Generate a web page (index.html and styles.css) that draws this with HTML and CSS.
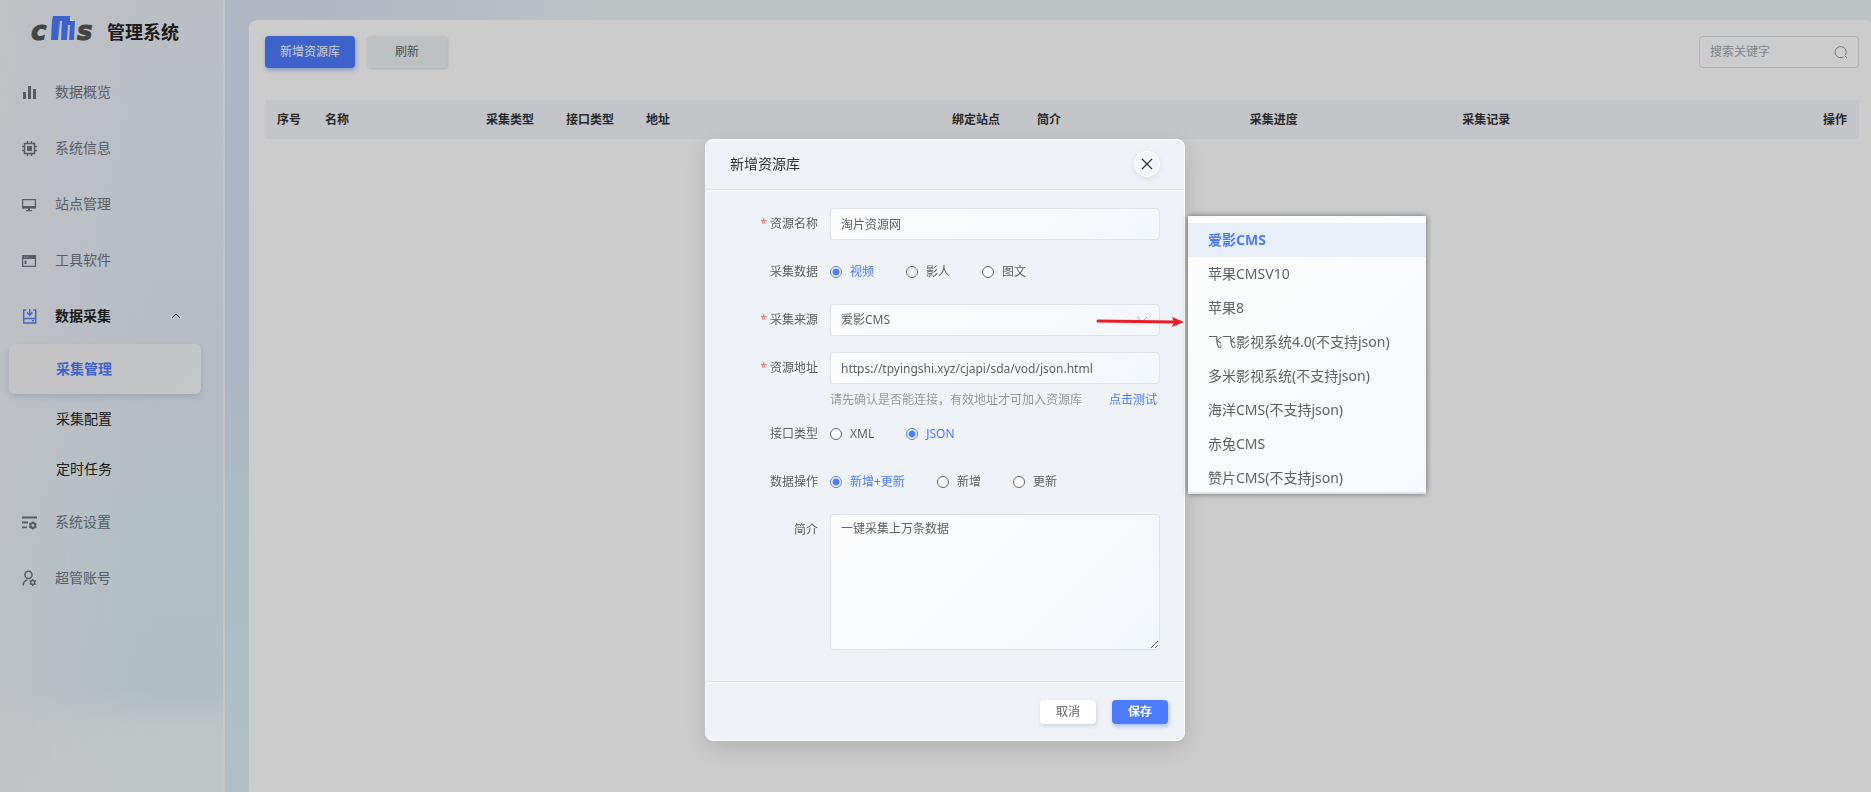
FILE: index.html
```html
<!DOCTYPE html>
<html lang="zh-CN">
<head>
    <meta charset="UTF-8">
    <meta name="viewport" content="width=device-width, initial-scale=1.0">
    <title>CMS 管理系统</title>
    <link rel="stylesheet" href="styles.css">
</head>
<body>
    <div class="layout">
        <aside class="sidebar">
            <div class="logo">
                <svg class="logo-mark" width="66" height="36" viewBox="0 0 66 36">
                    <text class="logo-letter" x="1" y="28">c</text>
                    <path fill="#4d7cfe" d="M23 4h17l5 5-1 19h-5l1-15h-2l-1 15h-6l1-19h-2l-2 19h-7l1-19z"/>
                    <path fill="#fff" d="M40 4l5 5h-5z"/>
                    <text class="logo-letter" x="47" y="28">s</text>
                </svg>
                <span class="logo-name">管理系统</span>
            </div>
            <nav>
                <ul class="menu">
                    <li>
                        <a href="#" class="menu-item">
                            <svg class="icon" viewBox="0 0 16 16"><path fill="currentColor" d="M1 8h3v7H1zM6 2h3v13H6zM11 5h3v10h-3z"/></svg>
                            <span>数据概览</span>
                        </a>
                    </li>
                    <li>
                        <a href="#" class="menu-item">
                            <svg class="icon" viewBox="0 0 16 16"><path fill="none" stroke="currentColor" stroke-width="1.500" d="M2.500 3.500h10v10h-10zM5.500 1v2.500M9.500 1v2.500M5.500 13.500V16M9.500 13.500V16M0 6.500h2.500M0 10.500h2.500M12.500 6.500H15M12.500 10.500H15"/><path fill="currentColor" d="M5 6h5v5H5z"/></svg>
                            <span>系统信息</span>
                        </a>
                    </li>
                    <li>
                        <a href="#" class="menu-item">
                            <svg class="icon" viewBox="0 0 16 16"><path fill="none" stroke="currentColor" stroke-width="1.300" d="M.6 3.600h12.800v8H.6z"/><path fill="currentColor" d="M0 10h14v2.500H0zM6 12h2v2h2v1.300H4V14h2z"/></svg>
                            <span>站点管理</span>
                        </a>
                    </li>
                    <li>
                        <a href="#" class="menu-item">
                            <svg class="icon" viewBox="0 0 16 16"><path fill="none" stroke="currentColor" stroke-width="1.300" d="M.6 3.600h12.800v10.800H.6z"/><path fill="currentColor" d="M0 3h14v4H0zM2.500 8.500h2v3.500h-2z"/><path fill="#fff" fill-opacity=".6" d="M2 4.500h1.200v1.200H2zM4.500 4.500h1.200v1.200H4.500z"/></svg>
                            <span>工具软件</span>
                        </a>
                    </li>
                    <li>
                        <a href="#" class="menu-item open">
                            <svg class="icon" viewBox="0 0 16 16"><path fill="none" stroke="#4d7cfe" stroke-width="1.400" d="M4 2H1.700v13h12V2h-2.500M2 10.500h12M7.700 1v6M5 4.500l2.700 2.700 2.700-2.700M10 12.800h2"/></svg>
                            <span>数据采集</span>
                            <svg class="arrow" viewBox="0 0 10 10"><path fill="none" stroke="currentColor" d="M1 7l4-4 4 4"/></svg>
                        </a>
                        <ul class="submenu">
                            <li><a href="#" class="submenu-item active">采集管理</a></li>
                            <li><a href="#" class="submenu-item">采集配置</a></li>
                            <li><a href="#" class="submenu-item">定时任务</a></li>
                        </ul>
                    </li>
                    <li>
                        <a href="#" class="menu-item">
                            <svg class="icon" viewBox="0 0 16 16"><path fill="none" stroke="currentColor" stroke-width="1.800" d="M0 3.500h15M0 8.500h6M0 13.300h5"/><circle cx="10.800" cy="11.500" r="2.400" fill="none" stroke="currentColor" stroke-width="2"/><path stroke="currentColor" stroke-width="1.800" d="M10.800 7.500v1.500M10.800 14v1.500M7.300 9.500l1.300.8M13 12.700l1.300.8M7.300 13.500l1.300-.8M13 10.300l1.300-.8"/></svg>
                            <span>系统设置</span>
                        </a>
                    </li>
                    <li>
                        <a href="#" class="menu-item">
                            <svg class="icon" viewBox="0 0 16 16"><circle cx="6.500" cy="4.800" r="3.600" fill="none" stroke="currentColor" stroke-width="1.500"/><path fill="none" stroke="currentColor" stroke-width="1.500" d="M1.200 15.500c0-3 1.500-5 4.300-5.500"/><circle cx="10.700" cy="12.500" r="2" fill="none" stroke="currentColor" stroke-width="1.400"/><path stroke="currentColor" stroke-width="1.400" d="M10.700 9v1.500M10.700 14.500V16M7.600 10.700l1.300.8M12.500 13.500l1.300.8M7.600 14.300l1.300-.8M12.500 11.500l1.300-.8"/></svg>
                            <span>超管账号</span>
                        </a>
                    </li>
                </ul>
            </nav>
        </aside>

        <main class="panel">
            <div class="toolbar">
                <button type="button" class="btn btn-primary">新增资源库</button>
                <button type="button" class="btn btn-default">刷新</button>
                <label class="search">
                    <input type="text" placeholder="搜索关键字" aria-label="搜索关键字">
                    <svg viewBox="0 0 14 14"><path fill="none" stroke="currentColor" d="M9.500 12a5.600 5.600 0 1 1 2-2M10.500 10.500l2.500 2.500"/></svg>
                </label>
            </div>
            <table class="table">
                <colgroup>
                    <col class="col-no">
                    <col class="col-name">
                    <col class="col-type">
                    <col class="col-type">
                    <col class="col-url">
                    <col class="col-site">
                    <col>
                    <col>
                    <col>
                    <col class="col-action">
                </colgroup>
                <thead>
                    <tr>
                        <th>序号</th>
                        <th>名称</th>
                        <th>采集类型</th>
                        <th>接口类型</th>
                        <th>地址</th>
                        <th>绑定站点</th>
                        <th>简介</th>
                        <th>采集进度</th>
                        <th>采集记录</th>
                        <th class="right">操作</th>
                    </tr>
                </thead>
            </table>
        </main>
    </div>

    <div class="mask">
        <div class="dialog" role="dialog" aria-labelledby="dialogTitle">
            <form>
                <header class="dialog-header">
                    <h2 id="dialogTitle">新增资源库</h2>
                    <button type="button" class="close" aria-label="关闭">
                        <svg viewBox="0 0 12 12"><path fill="none" stroke="currentColor" stroke-width="1.200" d="M1 1l10 10M11 1L1 11"/></svg>
                    </button>
                </header>

                <div class="dialog-body">
                    <div class="form-row">
                        <label class="form-label required" for="name">资源名称</label>
                        <input type="text" class="field" id="name" value="淘片资源网">
                    </div>
                    <div class="form-row">
                        <span class="form-label">采集数据</span>
                        <div class="radios">
                            <label><input type="radio" name="data" checked><span>视频</span></label>
                            <label><input type="radio" name="data"><span>影人</span></label>
                            <label><input type="radio" name="data"><span>图文</span></label>
                        </div>
                    </div>
                    <div class="form-row">
                        <label class="form-label required" for="source">采集来源</label>
                        <div class="select">
                            <select class="field" id="source">
                                <option>爱影CMS</option>
                                <option>苹果CMSV10</option>
                                <option>苹果8</option>
                                <option>飞飞影视系统4.0(不支持json)</option>
                                <option>多米影视系统(不支持json)</option>
                                <option>海洋CMS(不支持json)</option>
                                <option>赤兔CMS</option>
                                <option>赞片CMS(不支持json)</option>
                            </select>
                            <svg class="select-arrow" viewBox="0 0 12 12"><path fill="none" stroke="currentColor" d="M1 3l5 5 5-5"/></svg>
                            <svg class="pointer" viewBox="0 0 88 12"><path stroke="#ec1c24" stroke-width="3" stroke-linecap="round" d="M2 5l76 1"/><path fill="#ec1c24" d="M76 1l12 5-12 5 2-5z"/></svg>
                        </div>
                    </div>
                    <div class="form-row with-hint">
                        <label class="form-label required" for="url">资源地址</label>
                        <input type="text" class="field" id="url" value="https://tpyingshi.xyz/cjapi/sda/vod/json.html">
                    </div>
                    <div class="hint">
                        <span>请先确认是否能连接，有效地址才可加入资源库</span>
                        <a href="#">点击测试</a>
                    </div>
                    <div class="form-row">
                        <span class="form-label">接口类型</span>
                        <div class="radios">
                            <label><input type="radio" name="api"><span>XML</span></label>
                            <label><input type="radio" name="api" checked><span>JSON</span></label>
                        </div>
                    </div>
                    <div class="form-row">
                        <span class="form-label">数据操作</span>
                        <div class="radios">
                            <label><input type="radio" name="action" checked><span>新增+更新</span></label>
                            <label><input type="radio" name="action"><span>新增</span></label>
                            <label><input type="radio" name="action"><span>更新</span></label>
                        </div>
                    </div>
                    <div class="form-row">
                        <label class="form-label" for="intro">简介</label>
                        <textarea class="field" id="intro">一键采集上万条数据</textarea>
                    </div>
                </div>

                <footer class="dialog-footer">
                    <button type="button" class="btn btn-small btn-white">取消</button>
                    <button type="submit" class="btn btn-small btn-primary">保存</button>
                </footer>
            </form>

            <ul class="dropdown" role="listbox" aria-label="采集来源">
                <li role="option" class="selected" aria-selected="true">爱影CMS</li>
                <li role="option">苹果CMSV10</li>
                <li role="option">苹果8</li>
                <li role="option">飞飞影视系统4.0(不支持json)</li>
                <li role="option">多米影视系统(不支持json)</li>
                <li role="option">海洋CMS(不支持json)</li>
                <li role="option">赤兔CMS</li>
                <li role="option">赞片CMS(不支持json)</li>
            </ul>
        </div>
    </div>
</body>
</html>
```
FILE: styles.css
```css
* {
    box-sizing: border-box;
}
body {
    margin: 0;
    font-family: "Noto Sans", "Noto Sans CJK SC", sans-serif;
    font-size: 12px;
    line-height: 18px;
    color: #606266;
    overflow: hidden;
}
ul {
    list-style: none;
    margin: 0;
    padding: 0;
}
a {
    text-decoration: none;
}
button, input, select, textarea {
    font: inherit;
    color: inherit;
}

/* layout */
.layout {
    display: flex;
    min-height: 100vh;
    background:
        linear-gradient(90deg, transparent 0, transparent 260px, #ebf2f6 600px),
        linear-gradient(180deg, #dbe4f5 0, #dbe2f5 45%, #d6ecf6 65%, #dcf0f8 100%);
}
.sidebar {
    width: 225px;
    flex-shrink: 0;
    border-right: 2px solid rgba(255, 255, 255, 0.5);
    background:
        linear-gradient(90deg, rgba(240, 242, 246, 0.8), rgba(240, 242, 246, 0) 70%),
        linear-gradient(180deg, #eaeff5 0, #e8eefa 20%, #e6ecf8 45%, #dcf0f6 70%, #dbeef6 87%, #edf5f8 92%, #f1f8fb 100%);
}
.panel {
    flex: 1;
    min-width: 0;
    margin: 20px 0 0 24px;
    padding: 16px 12px 0 16px;
    background: #fff;
    border-radius: 8px 4px 0 0;
}

/* sidebar */
.logo {
    display: flex;
    align-items: center;
    gap: 11px;
    height: 64px;
    padding-left: 30px;
}
.logo-mark {
    margin-bottom: 4px;
    overflow: visible;
}
.logo-letter {
    font: italic bold 26px "DejaVu Sans", sans-serif;
    fill: #555;
    stroke: #555;
    stroke-width: 1px;
}
.logo-name {
    font-size: 18px;
    line-height: 24px;
    font-weight: bold;
    color: #222;
}
.menu-item {
    display: flex;
    align-items: center;
    height: 56px;
    padding: 0 42px 0 22px;
    font-size: 14px;
    color: #6f747e;
}
.menu-item.open {
    font-weight: bold;
    color: #222;
}
.icon {
    width: 16px;
    height: 16px;
    margin-right: 17px;
}
.arrow {
    width: 10px;
    height: 10px;
    margin-left: auto;
}
.submenu-item {
    display: block;
    height: 50px;
    margin: 0 24px 0 9px;
    padding-left: 47px;
    border-radius: 6px;
    font-size: 14px;
    line-height: 50px;
    color: #222;
}
.submenu-item.active {
    margin-right: 22px;
    background: linear-gradient(135deg, #f5f5f7, #f7f9fb);
    box-shadow: 0 3px 6px rgba(120, 150, 220, 0.3);
    color: #4d7cfe;
    font-weight: bold;
}

/* toolbar */
.toolbar {
    display: flex;
    gap: 12px;
    margin-bottom: 32px;
}
.btn {
    height: 32px;
    border: none;
    border-radius: 4px;
    cursor: pointer;
}
.btn-primary {
    width: 90px;
    background: #4d7cfe;
    color: #fff;
    box-shadow: 1px 2px 4px rgba(77, 124, 254, 0.5);
}
.btn-default {
    width: 80px;
    background: #edf2f5;
    box-shadow: 1px 1px 3px rgba(0, 0, 0, 0.15);
}
.search {
    display: flex;
    align-items: center;
    width: 160px;
    height: 32px;
    margin-left: auto;
    padding: 0 10px;
    border: 1px solid #d8dee4;
    border-radius: 4px;
    color: #8f959e;
}
.search input {
    flex: 1;
    min-width: 0;
    padding: 0;
    border: none;
    outline: none;
    background: none;
}
.search input::placeholder {
    color: #a0a6ae;
}
.search svg {
    width: 14px;
    height: 14px;
}

/* table */
.table {
    width: 100%;
    table-layout: fixed;
    border-collapse: collapse;
}
.table th {
    height: 39px;
    padding: 1px 12px 0;
    background: #f5f7fc;
    color: #333;
    text-align: left;
}
.table th.right {
    text-align: right;
}
.col-no {
    width: 48px;
}
.col-name {
    width: 161px;
}
.col-type {
    width: 80px;
}
.col-url {
    width: 306px;
}
.col-site {
    width: 85px;
}
.col-action {
    width: 196px;
}

/* dialog */
.mask {
    position: fixed;
    inset: 0;
    display: flex;
    justify-content: center;
    align-items: flex-start;
    padding-top: 139px;
    background: rgba(0, 0, 0, 0.2);
}
.dialog {
    position: relative;
    width: 480px;
    margin-left: 19px;
    border: 1px solid #fff;
    border-radius: 8px;
    background: #eff3f8;
    box-shadow: 0 6px 24px rgba(0, 0, 0, 0.15);
}
.dialog-header {
    display: flex;
    justify-content: space-between;
    align-items: center;
    height: 50px;
    padding: 0 24px 2px;
    border-bottom: 1px solid #d3def0;
}
.dialog-header h2 {
    margin: 0;
    font-size: 14px;
    font-weight: normal;
    color: #303133;
}
.close {
    display: flex;
    align-items: center;
    justify-content: center;
    width: 26px;
    height: 26px;
    padding: 0;
    border: 1px solid #fff;
    border-radius: 50%;
    background: #f4f5f7;
    box-shadow: 0 2px 6px rgba(0, 0, 0, 0.08);
    color: #303133;
}
.close svg {
    width: 12px;
    height: 12px;
}
.dialog-body {
    padding: 17px 24px 15px;
    border-top: 1px solid #fff;
}
.form-row {
    display: flex;
    gap: 12px;
    margin-bottom: 16px;
}
.form-row.with-hint {
    margin-bottom: 0;
}
.form-label {
    width: 88px;
    line-height: 32px;
    text-align: right;
}
.required::before {
    content: "*";
    margin-right: 3px;
    color: #f56c6c;
}
.field {
    flex: 1;
    min-width: 0;
    width: 100%;
    height: 32px;
    padding: 0 10px;
    border: 1px solid #dfe4ea;
    border-radius: 4px;
    outline: none;
    background: linear-gradient(135deg, #fcfcfc, #f3f8fc);
}
textarea.field {
    height: 136px;
    padding: 5px 10px;
    resize: vertical;
}
.select {
    position: relative;
    flex: 1;
}
select.field {
    appearance: none;
}
.select-arrow {
    position: absolute;
    top: 10px;
    right: 12px;
    width: 12px;
    height: 12px;
    color: #a8abb2;
}
.pointer {
    position: absolute;
    top: 12px;
    right: -24px;
    width: 88px;
    height: 12px;
}
.radios {
    display: flex;
    gap: 32px;
    height: 32px;
}
.radios label {
    display: flex;
    align-items: center;
    gap: 8px;
}
.radios input {
    appearance: none;
    width: 12px;
    height: 12px;
    margin: 0;
    border: 1px solid #606266;
    border-radius: 50%;
    background: #fff;
}
.radios input:checked {
    border-color: #4d7cfe;
    background: radial-gradient(#4d7cfe 3px, #fff 4px);
}
.radios input:checked + span {
    color: #4d7cfe;
}
.hint {
    display: flex;
    justify-content: space-between;
    height: 34px;
    padding: 7px 3px 0 100px;
    color: #999;
}
.hint a {
    color: #4d7cfe;
}
.dialog-footer {
    display: flex;
    justify-content: flex-end;
    gap: 16px;
    padding: 18px 16px 16px;
    border-top: 1px solid #d3def0;
    box-shadow: inset 0 1px #fff;
}
.btn-small {
    width: 56px;
    height: 24px;
}
.btn-white {
    background: #fff;
    box-shadow: 1px 2px 4px rgba(100, 120, 160, 0.25);
}
.dialog-footer .btn-primary {
    font-weight: bold;
}

/* dropdown */
.dropdown {
    position: absolute;
    top: 76px;
    left: calc(100% + 4px);
    width: 238px;
    height: 278px;
    padding-top: 7px;
    overflow: hidden;
    border-bottom: 2px solid #dde1ea;
    background: linear-gradient(135deg, #fcfcfb, #f5f9fd);
    box-shadow: 0 0 6px rgba(0, 0, 0, 0.5);
    font-size: 14px;
}
.dropdown li {
    height: 34px;
    padding-left: 20px;
    line-height: 34px;
}
.dropdown .selected {
    background: #e9eff8;
    color: #4d7cfe;
    font-weight: bold;
}
```
